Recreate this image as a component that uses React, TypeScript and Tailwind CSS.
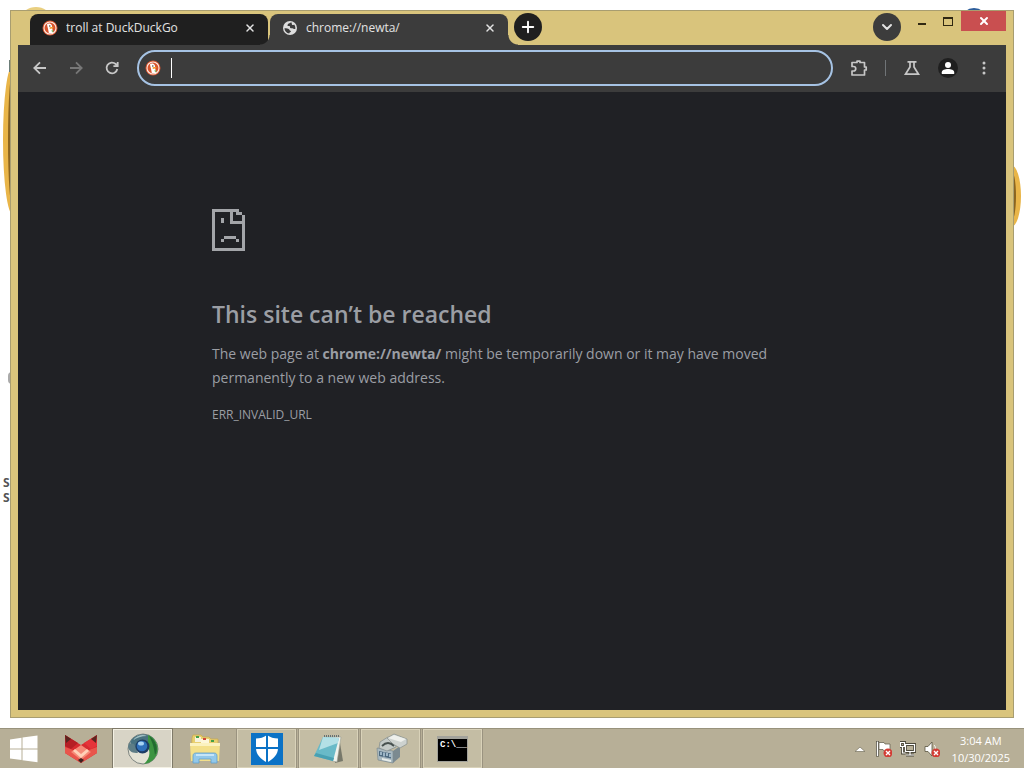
import { useState } from 'react'
import type { ReactNode } from 'react'
import clsx from 'clsx'
import { ChevronDown, Plus, X } from 'lucide-react'

interface Tab {
  id: string
  title: string
  icon: ReactNode
}

interface TaskbarItem {
  id: string
  label: string
  state: 'pinned' | 'open' | 'active'
  icon: ReactNode
}

function DuckIcon() {
  return (
    <svg viewBox="0 0 16 16" className="size-4 shrink-0" aria-hidden="true">
      <circle cx="8" cy="8" r="7.5" fill="#d9532c" />
      <circle cx="8" cy="8" r="6" fill="none" stroke="#fbe9e2" strokeWidth="1.1" />
      <path d="M5 4.300c1.500-1.200 4-.8 4.800 1 .5 1.300.2 2.300.5 3.700.3 1.500 1 2.600 1 3.500-1.600.9-3.300.9-4.500.4C6.500 10.500 5.600 7.500 5.300 6z" fill="#fff" />
      <circle cx="7.800" cy="6" r=".8" fill="#4a3a30" />
      <path d="M7.600 7.300l4-.5-.6 1.500-3.200.7z" fill="#f39a2c" />
      <path d="M9 10.800l2.200-.6v2z" fill="#5cb04a" />
    </svg>
  )
}

function GlobeIcon() {
  return (
    <svg viewBox="0 0 16 16" className="size-4 shrink-0" aria-hidden="true">
      <circle cx="8" cy="8" r="7" fill="#dedede" />
      <path d="M9.300 2.300c-1.200.7-2.400 1-3.400 2-.8.900-.4 2 .8 1.800 1.200-.2 1.300.4 1.300 1.300.2 1 1.500.7 2.400.8.9.2 1.400 1 2.900.8.3-1.700-.2-3.400-1.200-4.600-.8.700-1.500.8-2 .3-.4-.6-.2-1.600-.8-2.400z" fill="#3c3c3c" />
      <path d="M2.400 8.300c1.500-.3 3-.2 4.300.6 1 .7.700 1.500 1.700 1.800.9.300.5 1.300-.3 1.500-.7.200-.7.800-.9 1.400-2.600-.3-4.600-2.500-4.800-5.300z" fill="#3c3c3c" />
    </svg>
  )
}

function SadPageIcon() {
  return (
    <svg viewBox="0 0 33 42" shapeRendering="crispEdges" className="h-[42px] w-[33px]" fill="#a3a5a9" aria-hidden="true">
      <path d="M0 0h24v3H3v36h27V15h3v27H0z" />
      <path d="M18 3h3v9h12v3H18zM24 0h3v3h-3zM27 3h3v3h-3zM30 6h3v6h-3zM24 3h3v3h-3z" />
      <path d="M9 9h3v5H9zM12 27h12v3H12zM9 30h3v3H9zM24 30h3v3h-3z" />
    </svg>
  )
}

function WindowsIcon() {
  return (
    <svg viewBox="0 0 28 28" className="size-7" fill="#fff" aria-hidden="true">
      <path d="M0 4.500l11.500-1.700v10.700H0zM12.500 2.600L27.500.5v13H12.500zM0 14.500h11.500v10.600L0 23.500zM12.500 14.500h15v12.700l-15-2z" />
    </svg>
  )
}

function FoxIcon() {
  return (
    <svg viewBox="0 0 34 30" className="h-[30px] w-[34px]" aria-hidden="true">
      <path d="M1 1l16 10L33 1v18L17 29 1 19z" fill="#d62b30" />
      <path d="M1 1l13 8-7 6-6-3z" fill="#b51f25" />
      <path d="M33 1L20 9l7 6 6-3z" fill="#e5343a" />
      <path d="M1 1l6 4-5 4zM33 1l-6 4 5 4z" fill="#5a2520" />
      <path d="M1 13l8 3 8 7 8-7 8-3v6L17 29 1 19z" fill="#e9554c" />
      <path d="M17 11l10 7-10 8-10-8z" fill="#f58a78" />
      <path d="M11 15l6 5 6-5 2 2-8 7-8-7z" fill="#ffd0b8" />
      <path d="M14 26l3-2 3 2-3 3z" fill="#3c2220" />
    </svg>
  )
}

function BrowserIcon() {
  return (
    <svg viewBox="0 0 32 32" className="size-8" aria-hidden="true">
      <circle cx="16" cy="16" r="15" fill="#e4e3d5" stroke="#7d8480" strokeWidth="1" />
      <path d="M3 9A15 15 0 0 1 27 6l-5 6-9-1-4 8z" fill="#48717f" />
      <path d="M1 14c1 5 5 6 10 6l-4-9-5-1z" fill="#5d7d86" />
      <path d="M21 2a15 15 0 0 1-4 29c5-5 7-10 4-17z" fill="#3c9441" />
      <path d="M22 3c7 4 10 13 6 19-1-7-2-12-6-19z" fill="#236b31" />
      <path d="M6 7c4-5 10-6 14-4-6 0-10 2-14 4z" fill="#a3c1c5" />
      <circle cx="15.500" cy="13.500" r="7" fill="#1d3d64" />
      <circle cx="15" cy="13" r="5.300" fill="#2f70ba" />
      <ellipse cx="14" cy="10.500" rx="3" ry="2" fill="#a9d3f2" />
    </svg>
  )
}

function FolderIcon() {
  return (
    <svg viewBox="0 0 34 32" className="h-8 w-[34px]" aria-hidden="true">
      <path d="M4 5l1-3h8l2 2h6l2 2h7v21H3z" fill="#e8cf70" stroke="#c8a94c" strokeWidth=".7" />
      <path d="M7 4h6v5H7z" fill="#f7f3dc" />
      <path d="M13 6h8v5h-8z" fill="#fdf7d8" />
      <path d="M8 3h3v2H8z" fill="#43a047" />
      <path d="M15 5h3v2h-3z" fill="#d0493d" />
      <path d="M23 7h3v2h-3z" fill="#43a047" />
      <path d="M2 10h30l-1 18H3z" fill="#f3e08a" />
      <path d="M2 10h30v3H2z" fill="#fbf2bf" />
      <path d="M5 30v-7c0-2 1-3 3-3h18c2 0 3 1 3 3v7h-6v-4H11v4z" fill="#92c8ea" stroke="#609fcb" strokeWidth=".8" />
      <path d="M8 22h18" stroke="#d6effc" strokeWidth="1.500" />
    </svg>
  )
}

function DefenderIcon() {
  return (
    <svg viewBox="0 0 32 32" className="size-8" aria-hidden="true">
      <path d="M0 0h32v32H0z" fill="#0b72c6" />
      <path d="M16 2c3 2.500 7 3.500 11 3.500V15c0 7-5 11-11 14.500C10 26 5 22 5 15V5.500C9 5.500 13 4.500 16 2z" fill="#fff" />
      <path d="M16 2v28M4 15h24" stroke="#0b72c6" strokeWidth="2" />
    </svg>
  )
}

function NotebookIcon() {
  return (
    <svg viewBox="0 0 32 30" className="h-[30px] w-8" aria-hidden="true">
      <path d="M26 3l4 24-8 2z" fill="#77786a" />
      <path d="M11 3h17l-4 25-5-1z" fill="#f0f2ec" stroke="#9c9d90" strokeWidth=".6" />
      <path d="M10 3l16 1-6 23L1 22z" fill="#69bac8" />
      <path d="M10 3l16 1-1 5L6 16z" fill="#b3e0e6" />
      <path d="M1 22l19 5 1-3L3 19z" fill="#48a0b2" />
      <path d="M11 2h16" stroke="#667073" strokeWidth="2" strokeDasharray="1 1" />
    </svg>
  )
}

function PrinterIcon() {
  return (
    <svg viewBox="0 0 34 32" className="h-8 w-[34px]" aria-hidden="true">
      <path d="M3 15l16 3v12L4 27z" fill="#a9b9c0" stroke="#74838b" strokeWidth=".6" />
      <path d="M19 18l7-5v11l-7 6z" fill="#7b8a90" />
      <path d="M5 18l12 2.500v5L5 23z" fill="#4d6a80" />
      <path d="M7 19v3M10 19.500v4M13 20v3M16 21v3" stroke="#d3e8f4" strokeWidth="1.200" />
      <path d="M8 25l9 2v2l-9-2z" fill="#e6ece9" />
      <path d="M6 9l8-5 8 4v6l-9 4-8-3z" fill="#c3cac8" stroke="#808a8a" strokeWidth=".7" />
      <path d="M13 5l7-4 13 5v5l-7 4-7-4z" fill="#cdd2cf" stroke="#868f8d" strokeWidth=".7" />
      <path d="M14 5l6-3 12 4-5 3z" fill="#eef0ec" />
      <path d="M8 13c4-4 8-4 12 0" stroke="#46504f" strokeWidth="1.800" fill="none" />
    </svg>
  )
}

function TerminalIcon() {
  return (
    <div className="h-[26px] w-[31px] border border-t-[3px] border-[#a2a29b] bg-black pl-[2px] text-left font-['Liberation_Mono'] text-[9px] leading-[12px] font-bold whitespace-nowrap text-white">
      C:\__
    </div>
  )
}

const tabs: Tab[] = [
  { id: 'search', title: 'troll at DuckDuckGo', icon: <DuckIcon /> },
  { id: 'newta', title: 'chrome://newta/', icon: <GlobeIcon /> },
]

const taskbarItems: TaskbarItem[] = [
  { id: 'fox', label: 'Fox', state: 'pinned', icon: <FoxIcon /> },
  { id: 'browser', label: 'Browser', state: 'active', icon: <BrowserIcon /> },
  { id: 'explorer', label: 'File Explorer', state: 'pinned', icon: <FolderIcon /> },
  { id: 'defender', label: 'Defender', state: 'open', icon: <DefenderIcon /> },
  { id: 'notepad', label: 'Notepad', state: 'open', icon: <NotebookIcon /> },
  { id: 'printer', label: 'Printer', state: 'open', icon: <PrinterIcon /> },
  { id: 'cmd', label: 'Command Prompt', state: 'open', icon: <TerminalIcon /> },
]

// Parts of the wallpaper and icon labels that stick out behind the window
function Desktop() {
  return (
    <div className="absolute inset-0 overflow-hidden bg-white" aria-hidden="true">
      <div className="absolute top-[65px] left-[3px] h-[150px] w-5 rounded-[50%] border-[5px] border-[#e9b548] bg-[#8a6420]" />
      <div className="absolute top-[165px] right-[3px] h-[62px] w-5 rounded-[50%] border-[5px] border-[#e9b548] bg-[#8a6420]" />
      <div className="absolute top-[7px] left-[22px] h-5 w-7 rounded-[50%] bg-[#e9cf80]" />
      <div className="absolute top-[8px] right-[38px] h-5 w-6 rounded-[50%] bg-[#2c5d9b]" />
      <div className="absolute top-[60px] left-[9px] h-3 w-2 bg-[#6c7d78]" />
      <div className="absolute top-[372px] left-2 h-3 w-2 rounded-sm bg-[#aaa]" />
      <div className="absolute top-[475px] left-[3px] text-xs leading-[15px] font-bold text-[#555]">
        S<br />S
      </div>
    </div>
  )
}

function TitleBar({ active, onSelect }: { active: string; onSelect: (id: string) => void }) {
  return (
    <div className="flex h-[34px] items-end justify-between pl-3">
      <div className="flex items-end gap-[2px]">
        {tabs.map((tab) => {
          const isActive = tab.id === active
          return (
            <div
              key={tab.id}
              className={clsx(
                'relative flex h-[31px] w-[238px] items-center rounded-t-lg px-3 pb-[3px]',
                isActive ? 'z-10 bg-[#3c3c3c]' : 'bg-[#1f1f1f]'
              )}
            >
              {isActive && (
                <>
                  <span className="absolute bottom-0 -left-2.5 size-2.5 bg-[radial-gradient(circle_at_top_left,transparent_9px,#3c3c3c_10px)]" />
                  <span className="absolute -right-2.5 bottom-0 size-2.5 bg-[radial-gradient(circle_at_top_right,transparent_9px,#3c3c3c_10px)]" />
                </>
              )}
              <button
                onClick={() => onSelect(tab.id)}
                className="flex min-w-0 flex-1 items-center gap-2 text-xs text-[#e3e3e3]"
              >
                {tab.icon}
                <span className="truncate">{tab.title}</span>
              </button>
              <button aria-label="Close tab" className="text-[#e3e3e3]">
                <X className="size-3" strokeWidth={3} />
              </button>
            </div>
          )
        })}
        <button
          aria-label="New tab"
          className="mb-1 ml-1 flex size-7 items-center justify-center rounded-full bg-[#1f1f1f] text-white"
        >
          <Plus className="size-[18px]" strokeWidth={2.5} />
        </button>
      </div>

      <div className="flex h-full items-start">
        <button
          aria-label="Search tabs"
          className="mt-[2px] mr-2 flex size-7 items-center justify-center rounded-full bg-[#3c3c3c] text-[#e3e3e3]"
        >
          <ChevronDown className="size-4" strokeWidth={3} />
        </button>
        <button aria-label="Minimize" className="flex h-5 w-[26px] items-center justify-center">
          <span className="mt-[6px] h-[2px] w-2 bg-[#302812]" />
        </button>
        <button aria-label="Maximize" className="flex h-5 w-[26px] items-center justify-center">
          <span className="h-[9px] w-[10px] border border-t-2 border-[#302812]" />
        </button>
        <button aria-label="Close" className="flex h-5 w-[45px] items-center justify-center bg-[#c94f50] text-white">
          <X className="size-3" strokeWidth={4} />
        </button>
      </div>
    </div>
  )
}

function Toolbar() {
  return (
    <div className="flex h-[47px] items-center bg-[#3c3c3c] pr-3 pb-[2px] pl-3 text-[#c7c7c7]">
      <div className="flex items-center gap-4">
        <button aria-label="Back" className="size-5">
          <svg viewBox="0 0 20 20" fill="none" stroke="currentColor" strokeWidth="1.800">
            <path d="M16 10H4.500M10 4.300L4.300 10l5.700 5.700" />
          </svg>
        </button>
        <button aria-label="Forward" className="size-5 text-[#777]">
          <svg viewBox="0 0 20 20" fill="none" stroke="currentColor" strokeWidth="1.800">
            <path d="M4 10h11.500M10 4.300l5.700 5.700-5.700 5.700" />
          </svg>
        </button>
        <button aria-label="Reload" className="size-5">
          <svg viewBox="0 0 20 20" fill="none" stroke="currentColor" strokeWidth="1.800">
            <path d="M15.300 11A5.400 5.400 0 1 1 13.700 6l2 2M15.700 4v4.200h-4.300" />
          </svg>
        </button>
      </div>

      <label className="mr-4 ml-[15px] flex h-9 flex-1 items-center gap-[10px] rounded-full border-2 border-[#a6c3e4] bg-[#3c3c3c] px-[6px]">
        <DuckIcon />
        <span className="h-5 w-px bg-white" />
        <input aria-label="Address" className="min-w-0 flex-1 bg-transparent text-sm text-white outline-none" />
      </label>

      <div className="flex items-center">
        <button aria-label="Extensions" className="size-5">
          <svg viewBox="0 0 20 20" fill="none" stroke="currentColor" strokeWidth="1.700" strokeLinejoin="round">
            <path d="M3 4.500h5V3.200h3v1.300h4.500V9h1.700v3h-1.700v5H3v-4h1.500a1.700 1.700 0 0 0 0-4.500H3z" />
          </svg>
        </button>
        <span className="mx-4 h-4 w-px bg-[#707477]" />
        <button aria-label="Labs" className="size-5">
          <svg viewBox="0 0 20 20" fill="none" stroke="currentColor" strokeWidth="1.700">
            <path d="M5.500 3.800h9M8 4v5l-4.500 7.200h13L12 9V4" />
          </svg>
        </button>
        <button aria-label="Profile" className="mx-4 flex size-5 items-center justify-center rounded-full bg-[#1f1f1f] text-white">
          <svg viewBox="0 0 14 14" className="size-[14px]" fill="currentColor">
            <circle cx="7" cy="4" r="3" />
            <path d="M.800 13v-1.800C.800 9 4 8 7 8s6.200 1 6.200 3.200V13z" />
          </svg>
        </button>
        <button aria-label="Menu" className="size-5">
          <svg viewBox="0 0 20 20" fill="currentColor">
            <circle cx="10" cy="5" r="1.500" />
            <circle cx="10" cy="10" r="1.500" />
            <circle cx="10" cy="15" r="1.500" />
          </svg>
        </button>
      </div>
    </div>
  )
}

function ErrorPage() {
  return (
    <main className="flex-1 bg-[#202125] text-[#9b9ea4]">
      <div className="mx-auto w-full max-w-[600px] pt-[117px]">
        <SadPageIcon />
        <h1 className="mt-[48px] text-[23px] leading-[30px] font-semibold">This site can’t be reached</h1>
        <p className="mt-[13px] text-sm leading-6">
          The web page at <strong>chrome://newta/</strong> might be temporarily down or it may have moved
          permanently to a new web address.
        </p>
        <p className="mt-4 text-xs leading-[18px]">ERR_INVALID_URL</p>
      </div>
    </main>
  )
}

function ErrorMark() {
  return (
    <g>
      <circle cx="12" cy="12" r="4.500" fill="#d23c35" />
      <path d="M10 10l4 4M14 10l-4 4" stroke="#fff" strokeWidth="1.400" />
    </g>
  )
}

function Taskbar() {
  return (
    <footer className="relative flex h-10 items-stretch gap-[3px] border-t border-[#98927c] bg-[#b7af97]">
      <button aria-label="Start" className="flex w-12 items-center justify-center">
        <WindowsIcon />
      </button>
      {taskbarItems.map((item) => (
        <button
          key={item.id}
          aria-label={item.label}
          className={clsx(
            'flex w-[59px] items-center justify-center border',
            item.state === 'pinned' && 'border-transparent',
            item.state === 'open' && 'border-[#d9d2b9] bg-[#c4bda4] outline outline-[#9a9380]',
            item.state === 'active' && 'border-[#f4f1e4] bg-[#d8d4c6] outline outline-[#7f7a69]'
          )}
        >
          {item.icon}
        </button>
      ))}

      <div className="ml-auto flex items-center gap-2 pr-[14px] text-white">
        <button aria-label="Show hidden icons" className="size-4">
          <svg viewBox="0 0 16 16">
            <path d="M3 10.500L8 6l5 4.500z" fill="#fff" stroke="#777260" strokeWidth=".7" />
          </svg>
        </button>
        <button aria-label="Action Center" className="size-4">
          <svg viewBox="0 0 16 16">
            <path d="M1.500 0v15.500" stroke="#494638" strokeWidth="3" />
            <path d="M1.500 .5v14.500" stroke="#fff" strokeWidth="1.500" />
            <path d="M3 1.500h5l1 1.500h5V10H8L7 8.500H3z" fill="#fff" stroke="#5b5748" strokeWidth=".7" />
            <ErrorMark />
          </svg>
        </button>
        <button aria-label="Network" className="size-4">
          <svg viewBox="0 0 16 16" fill="none">
            <path d="M5.500 3.500h9v7h-9zM10 11v3M6 14h8M2.500 6v6h3M.5 1.500h4v4h-4z" stroke="#4d493b" strokeWidth="3" />
            <path d="M5.500 3.500h9v7h-9zM10 11v3M6 14h8M2.500 6v6h3M.5 1.500h4v4h-4z" stroke="#fff" strokeWidth="1.200" />
          </svg>
        </button>
        <button aria-label="Volume" className="size-4">
          <svg viewBox="0 0 16 16">
            <path d="M1 5.500h3L8 1v14l-4-4.500H1z" fill="#fff" stroke="#59543f" strokeWidth=".8" />
            <path d="M10 4c1 1 1.500 2 1.500 4" stroke="#fff" fill="none" />
            <ErrorMark />
          </svg>
        </button>
        <div className="ml-1 text-center text-[11px] leading-[17px]">
          <p>3:04 AM</p>
          <p>10/30/2025</p>
        </div>
      </div>
    </footer>
  )
}

export default function App() {
  const [activeTab, setActiveTab] = useState('newta')

  return (
    <div className="relative flex h-screen flex-col font-['Open_Sans','Noto_Sans',sans-serif]">
      <Desktop />
      <div className="relative flex flex-1 p-[10px]">
        <div className="flex flex-1 flex-col border border-[#a89d70] bg-[#d9c47c]">
          <div className="flex flex-1 flex-col px-[7px] pb-[7px]">
            <TitleBar active={activeTab} onSelect={setActiveTab} />
            <Toolbar />
            <ErrorPage />
          </div>
        </div>
      </div>
      <Taskbar />
    </div>
  )
}
